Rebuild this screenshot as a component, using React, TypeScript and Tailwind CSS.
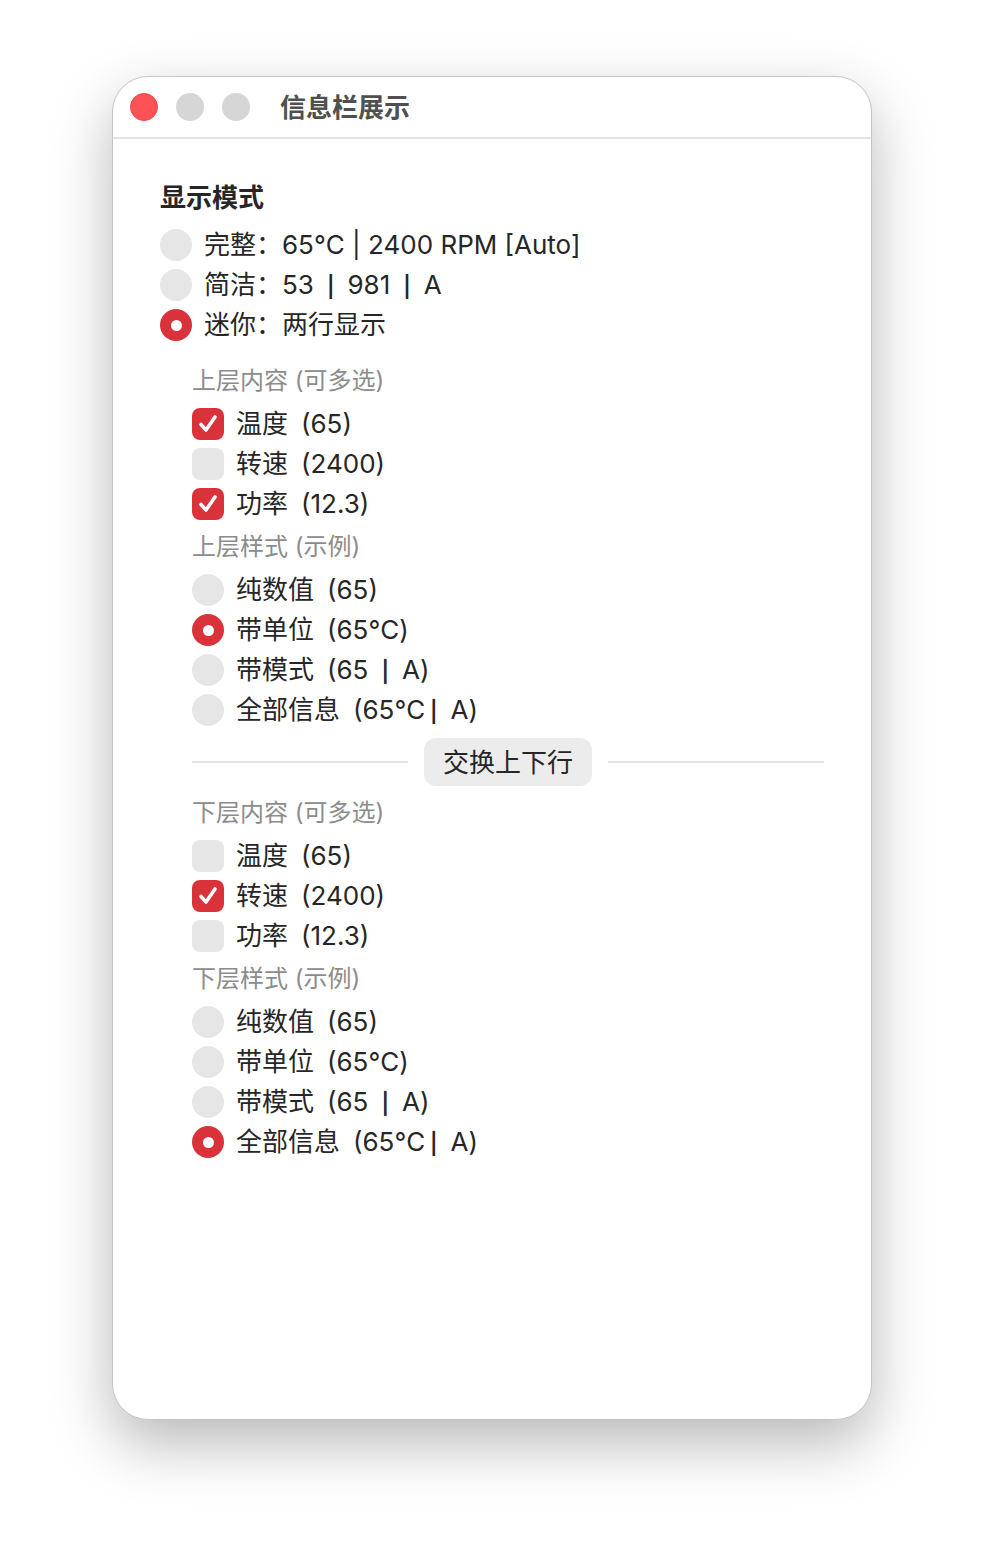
import React, { useState } from 'react';

const FONT = { fontFamily: '"Inter", "Noto Sans CJK SC", sans-serif' };

// short separator bar, like the full-width one in the original
const Bar = () => <span className="text-[21px] font-semibold">|</span>;

function Radio({ checked }: { checked: boolean }) {
  return checked ? (
    <span className="flex h-8 w-8 shrink-0 items-center justify-center rounded-full bg-[#d9323b]">
      <span className="h-[11px] w-[11px] rounded-full bg-white" />
    </span>
  ) : (
    <span className="h-8 w-8 shrink-0 rounded-full bg-[#e6e6e6]" />
  );
}

function Check({ checked }: { checked: boolean }) {
  return checked ? (
    <span className="flex h-8 w-8 shrink-0 items-center justify-center rounded-[8px] bg-[#d9323b]">
      <svg width="24" height="24" viewBox="0 0 24 24" fill="none">
        <path d="M5 12.5 L10 18 L19 5" stroke="white" strokeWidth="3.6" strokeLinecap="round" strokeLinejoin="round" />
      </svg>
    </span>
  ) : (
    <span className="h-8 w-8 shrink-0 rounded-[8px] bg-[#e6e6e6]" />
  );
}

function Row({ control, label, onClick }: { control: React.ReactNode; label: React.ReactNode; onClick?: () => void }) {
  return (
    <div className="flex h-10 cursor-default items-center gap-3" onClick={onClick}>
      {control}
      <span className="whitespace-pre text-[26px] leading-none text-[#262626]">{label}</span>
    </div>
  );
}

function SubLabel({ text }: { text: string }) {
  return <div className="flex h-[46px] items-center text-[24px] text-[#8c8c8c]">{text}</div>;
}

const contentItems = ['温度\u2002(65)', '转速\u2002(2400)', '功率\u2002(12.3)'];
const styleItems: React.ReactNode[] = [
  '纯数值\u2002(65)',
  '带单位\u2002(65°C)',
  <>带模式{'\u2002'}(65{'\u2002'}<Bar />{'\u2002'}A)</>,
  <>全部信息{'\u2002'}(65°C{'\u2009'}<Bar />{'\u2002'}A)</>,
];

function Layer({
  name,
  content,
  setContent,
  style,
  setStyle,
}: {
  name: string;
  content: boolean[];
  setContent: (v: boolean[]) => void;
  style: number;
  setStyle: (v: number) => void;
}) {
  return (
    <div>
      <SubLabel text={`${name}内容 (可多选)`} />
      {contentItems.map((c, i) => (
        <Row
          key={c}
          control={<Check checked={content[i]} />}
          label={c}
          onClick={() => setContent(content.map((v, j) => (j === i ? !v : v)))}
        />
      ))}
      <SubLabel text={`${name}样式 (示例)`} />
      {styleItems.map((s, i) => (
        <Row key={i} control={<Radio checked={style === i} />} label={s} onClick={() => setStyle(i)} />
      ))}
    </div>
  );
}

export default function App() {
  const [mode, setMode] = useState(2);
  const [top, setTop] = useState({ content: [true, false, true], style: 1 });
  const [bottom, setBottom] = useState({ content: [false, true, false], style: 3 });

  const modes: React.ReactNode[] = [
    '完整：65°C | 2400 RPM [Auto]',
    <>简洁：53{'\u2002'}<Bar />{'\u2002'}981{'\u2002'}<Bar />{'\u2002'}A</>,
    '迷你：两行显示',
  ];

  return (
    <div className="min-h-[1568px] bg-white pt-[76px]" style={FONT}>
      <div className="mx-auto flex h-[1344px] w-[760px] flex-col overflow-hidden rounded-[36px] border border-[#c4c4c4] bg-white shadow-[0_24px_60px_rgba(0,0,0,0.28)]">
        <div className="flex h-[62px] shrink-0 items-center border-b-2 border-[#e3e3e3] pl-[17px]">
          <div className="flex gap-[18px]">
            <span className="h-7 w-7 rounded-full border border-[#e2463f] bg-[#ff5257]" />
            <span className="h-7 w-7 rounded-full bg-[#d6d6d6]" />
            <span className="h-7 w-7 rounded-full bg-[#d6d6d6]" />
          </div>
          <span className="ml-[30px] text-[26px] font-bold text-[#505050]">信息栏展示</span>
        </div>

        <div className="px-[47px] pt-9">
          <div className="mb-[6px] flex h-[44px] items-center text-[26px] font-bold text-[#262626]">显示模式</div>
          {modes.map((m, i) => (
            <Row key={i} control={<Radio checked={mode === i} />} label={m} onClick={() => setMode(i)} />
          ))}

          <div className="mt-[13px] pl-8">
            <Layer
              name="上层"
              content={top.content}
              setContent={(c) => setTop({ ...top, content: c })}
              style={top.style}
              setStyle={(s) => setTop({ ...top, style: s })}
            />

            <div className="mb-[4px] mt-2 flex items-center gap-4">
              <div className="h-[2px] flex-1 bg-[#e3e3e3]" />
              <button
                onClick={() => {
                  setTop(bottom);
                  setBottom(top);
                }}
                className="flex h-12 w-[168px] items-center justify-center rounded-[12px] bg-[#ececec] text-[26px] text-[#262626]"
              >
                交换上下行
              </button>
              <div className="h-[2px] flex-1 bg-[#e3e3e3]" />
            </div>

            <Layer
              name="下层"
              content={bottom.content}
              setContent={(c) => setBottom({ ...bottom, content: c })}
              style={bottom.style}
              setStyle={(s) => setBottom({ ...bottom, style: s })}
            />
          </div>
        </div>
      </div>
    </div>
  );
}
